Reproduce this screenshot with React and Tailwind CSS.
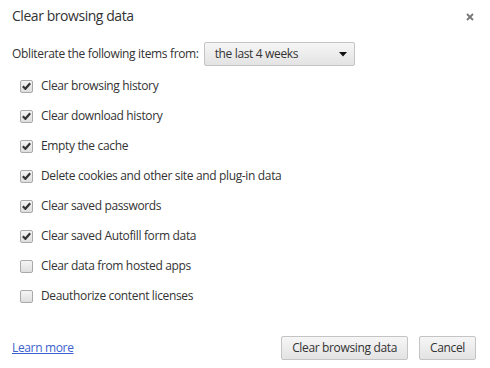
import React, { useState } from 'react';

const ITEMS = [
  { id: 'history',   label: 'Clear browsing history',                         checked: true  },
  { id: 'downloads', label: 'Clear download history',                         checked: true  },
  { id: 'cache',     label: 'Empty the cache',                                checked: true  },
  { id: 'cookies',   label: 'Delete cookies and other site and plug-in data', checked: true  },
  { id: 'passwords', label: 'Clear saved passwords',                          checked: true  },
  { id: 'autofill',  label: 'Clear saved Autofill form data',                 checked: true  },
  { id: 'hosted',    label: 'Clear data from hosted apps',                    checked: false },
  { id: 'licenses',  label: 'Deauthorize content licenses',                   checked: false },
];

const Checkbox = ({ checked, onChange }) => (
  <button
    onClick={onChange}
    className="w-[13px] h-[13px] rounded-[2px] border border-[#a9a9a9] bg-gradient-to-b from-[#f4f4f4] to-[#dedede] flex items-center justify-center shrink-0"
  >
    {checked && (
      <svg width="9" height="8" viewBox="0 0 9 8">
        <path d="M0.8 4.2 L3.4 6.8 L8.2 1.2" fill="none" stroke="#333" strokeWidth="2.2" />
      </svg>
    )}
  </button>
);

const App = () => {
  const [items, setItems] = useState(ITEMS);

  const toggle = (id) =>
    setItems(items.map((it) => (it.id === id ? { ...it, checked: !it.checked } : it)));

  return (
    <div className="w-[490px] h-[368px] bg-white flex flex-col px-3 text-[#333] text-[12px] tracking-[-0.35px] font-['Open_Sans',sans-serif] overflow-hidden">

      {/* Title bar */}
      <div className="pt-[6px] flex items-start justify-between">
        <h1 className="text-[14px] leading-[20px] tracking-[-0.45px] text-[#333]">Clear browsing data</h1>
        <svg width="8" height="8" viewBox="0 0 8 8" className="mt-[7px] mr-[4px]">
          <path d="M1 1 L7 7 M7 1 L1 7" stroke="#777" strokeWidth="1.8" />
        </svg>
      </div>

      {/* Time range */}
      <div className="mt-[16px] flex items-center h-6 gap-[5px]">
        <span>Obliterate the following items from:</span>
        <div className="w-[151px] h-6 rounded-[2px] border border-[#c4c4c4] bg-gradient-to-b from-[#f6f6f6] to-[#e3e3e3] flex items-center justify-between pl-[10px] pr-[7px]">
          <span>the last 4 weeks</span>
          <svg width="8" height="5" viewBox="0 0 8 5">
            <path d="M0 0 H8 L4 4.5 Z" fill="#111" />
          </svg>
        </div>
      </div>

      {/* Options */}
      <div className="mt-[5px] flex flex-col">
        {items.map(({ id, label, checked }) => (
          <label key={id} className="h-[30px] flex items-center gap-[8px] pl-[8px]">
            <Checkbox checked={checked} onChange={() => toggle(id)} />
            <span>{label}</span>
          </label>
        ))}
      </div>

      {/* Footer */}
      <div className="mt-auto pb-[8px] flex items-center justify-between">
        <a href="#" className="text-[#3b5fce] underline">Learn more</a>
        <div className="flex items-center gap-[11px] mr-[2px]">
          <button className="h-6 px-[10px] rounded-[2px] border border-[#c4c4c4] bg-gradient-to-b from-[#f6f6f6] to-[#e3e3e3]">
            Clear browsing data
          </button>
          <button className="h-6 px-[10px] rounded-[2px] border border-[#c4c4c4] bg-gradient-to-b from-[#f6f6f6] to-[#e3e3e3]">
            Cancel
          </button>
        </div>
      </div>
    </div>
  );
};

export default App;
